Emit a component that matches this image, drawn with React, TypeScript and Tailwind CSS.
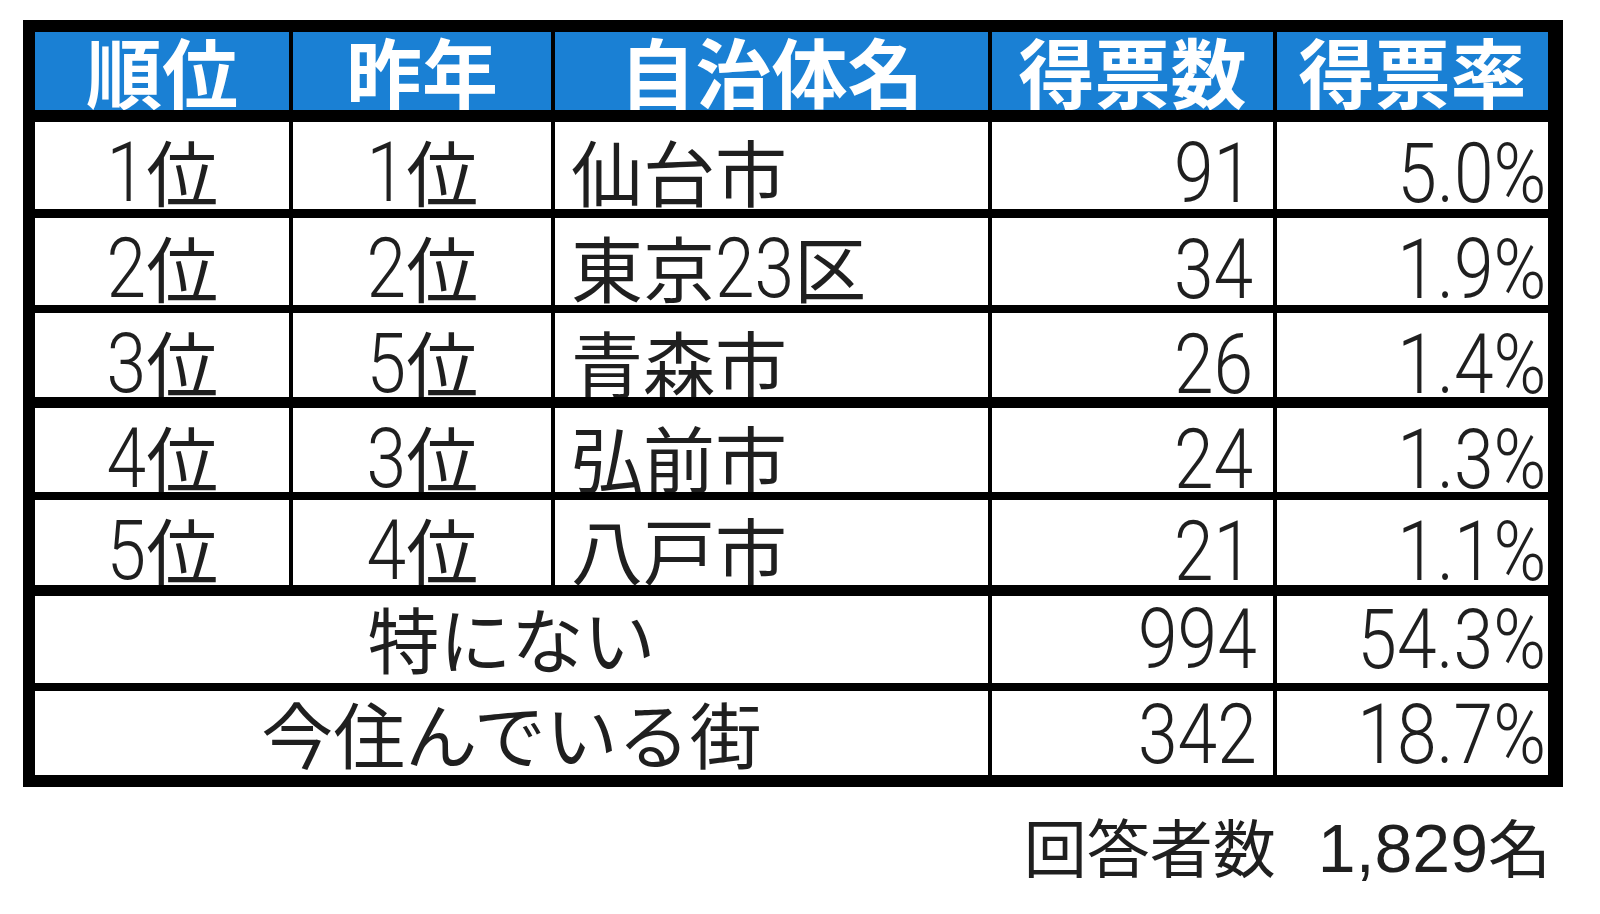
import React from "react";

type Row = {
  rank: string;
  prev: string;
  name: string;
  votes: string;
  rate: string;
  gap: string;
  h: string;
};

const rows: Row[] = [
  { rank: "1位", prev: "1位", name: "仙台市", votes: "91", rate: "5.0%", gap: "mt-[12px]", h: "h-[87px]" },
  { rank: "2位", prev: "2位", name: "東京23区", votes: "34", rate: "1.9%", gap: "mt-[9px]", h: "h-[87px]" },
  { rank: "3位", prev: "5位", name: "青森市", votes: "26", rate: "1.4%", gap: "mt-[8px]", h: "h-[84px]" },
  { rank: "4位", prev: "3位", name: "弘前市", votes: "24", rate: "1.3%", gap: "mt-[11px]", h: "h-[84px]" },
  { rank: "5位", prev: "4位", name: "八戸市", votes: "21", rate: "1.1%", gap: "mt-[8px]", h: "h-[85px]" },
];

const others = [
  { label: "特にない", votes: "994", rate: "54.3%", gap: "mt-[11px]", h: "h-[87px]" },
  { label: "今住んでいる街", votes: "342", rate: "18.7%", gap: "mt-[8px]", h: "h-[84px]" },
];

const headers = ["順位", "昨年", "自治体名", "得票数", "得票率"];

const cols = "grid grid-cols-[254px_258px_433px_281px_271px] gap-x-[4px]";
const cell = "bg-white overflow-hidden flex text-[#1f1f1f]";
const jp = "font-['Noto_Sans_CJK_JP',sans-serif] text-[72px] leading-none";
// tall, narrow figures like the spreadsheet font
const digits = "inline-block scale-x-[0.85] font-['Roboto',sans-serif] font-light text-[84px]";

function Mixed({ text }: { text: string }) {
  const parts = text.split(/(\d+)/).filter(Boolean);
  return (
    <div className={jp}>
      {parts.map((p, i) =>
        /\d/.test(p) ? (
          <span
            key={i}
            className={`${digits} origin-center leading-[72px] ${p.length > 1 ? "-mx-[7px]" : "-mx-[3px]"}`}
          >
            {p}
          </span>
        ) : (
          <span key={i}>{p}</span>
        )
      )}
    </div>
  );
}

function Num({ text }: { text: string }) {
  return <div className={`${digits} origin-right leading-none`}>{text}</div>;
}

export default function App() {
  return (
    <div className="min-h-screen bg-white pl-[23px] pt-[20px]">
      <div className="w-[1540px] bg-black border-black border-t-[12px] border-l-[12px] border-r-[15px] border-b-[12px]">
        <div className={`${cols} h-[78px]`}>
          {headers.map((h) => (
            <div
              key={h}
              className="bg-[#1a80d4] overflow-hidden flex justify-center text-white font-bold text-[76px] leading-none font-['Noto_Sans_CJK_JP',sans-serif]"
            >
              {h}
            </div>
          ))}
        </div>

        {rows.map((r) => (
          <div key={r.rank} className={`${cols} ${r.gap} ${r.h}`}>
            <div className={`${cell} justify-center pt-[12px]`}>
              <Mixed text={r.rank} />
            </div>
            <div className={`${cell} justify-center pt-[12px]`}>
              <Mixed text={r.prev} />
            </div>
            <div className={`${cell} justify-start pl-[16px] pt-[12px]`}>
              <Mixed text={r.name} />
            </div>
            <div className={`${cell} justify-end pr-[20px] pt-[10px]`}>
              <Num text={r.votes} />
            </div>
            <div className={`${cell} justify-end pr-[2px] pt-[10px]`}>
              <Num text={r.rate} />
            </div>
          </div>
        ))}

        {others.map((o) => (
          <div key={o.label} className={`${cols} ${o.gap} ${o.h}`}>
            <div className={`${cell} col-span-3 justify-center pt-[5px]`}>
              <div className={jp}>{o.label}</div>
            </div>
            <div className={`${cell} justify-end pr-[16px] pt-[2px]`}>
              <Num text={o.votes} />
            </div>
            <div className={`${cell} justify-end pr-[2px] pt-[2px]`}>
              <Num text={o.rate} />
            </div>
          </div>
        ))}
      </div>

      <div className="w-[1540px] flex justify-end items-baseline pr-[12px] mt-[26px] leading-none text-[#1f1f1f]">
        <span className="font-['Noto_Sans_CJK_JP',sans-serif] text-[63px]">回答者数</span>
        <span className="ml-[42px] font-['Liberation_Sans',sans-serif] text-[68px]">1,829</span>
        <span className="font-['Noto_Sans_CJK_JP',sans-serif] text-[63px]">名</span>
      </div>
    </div>
  );
}
